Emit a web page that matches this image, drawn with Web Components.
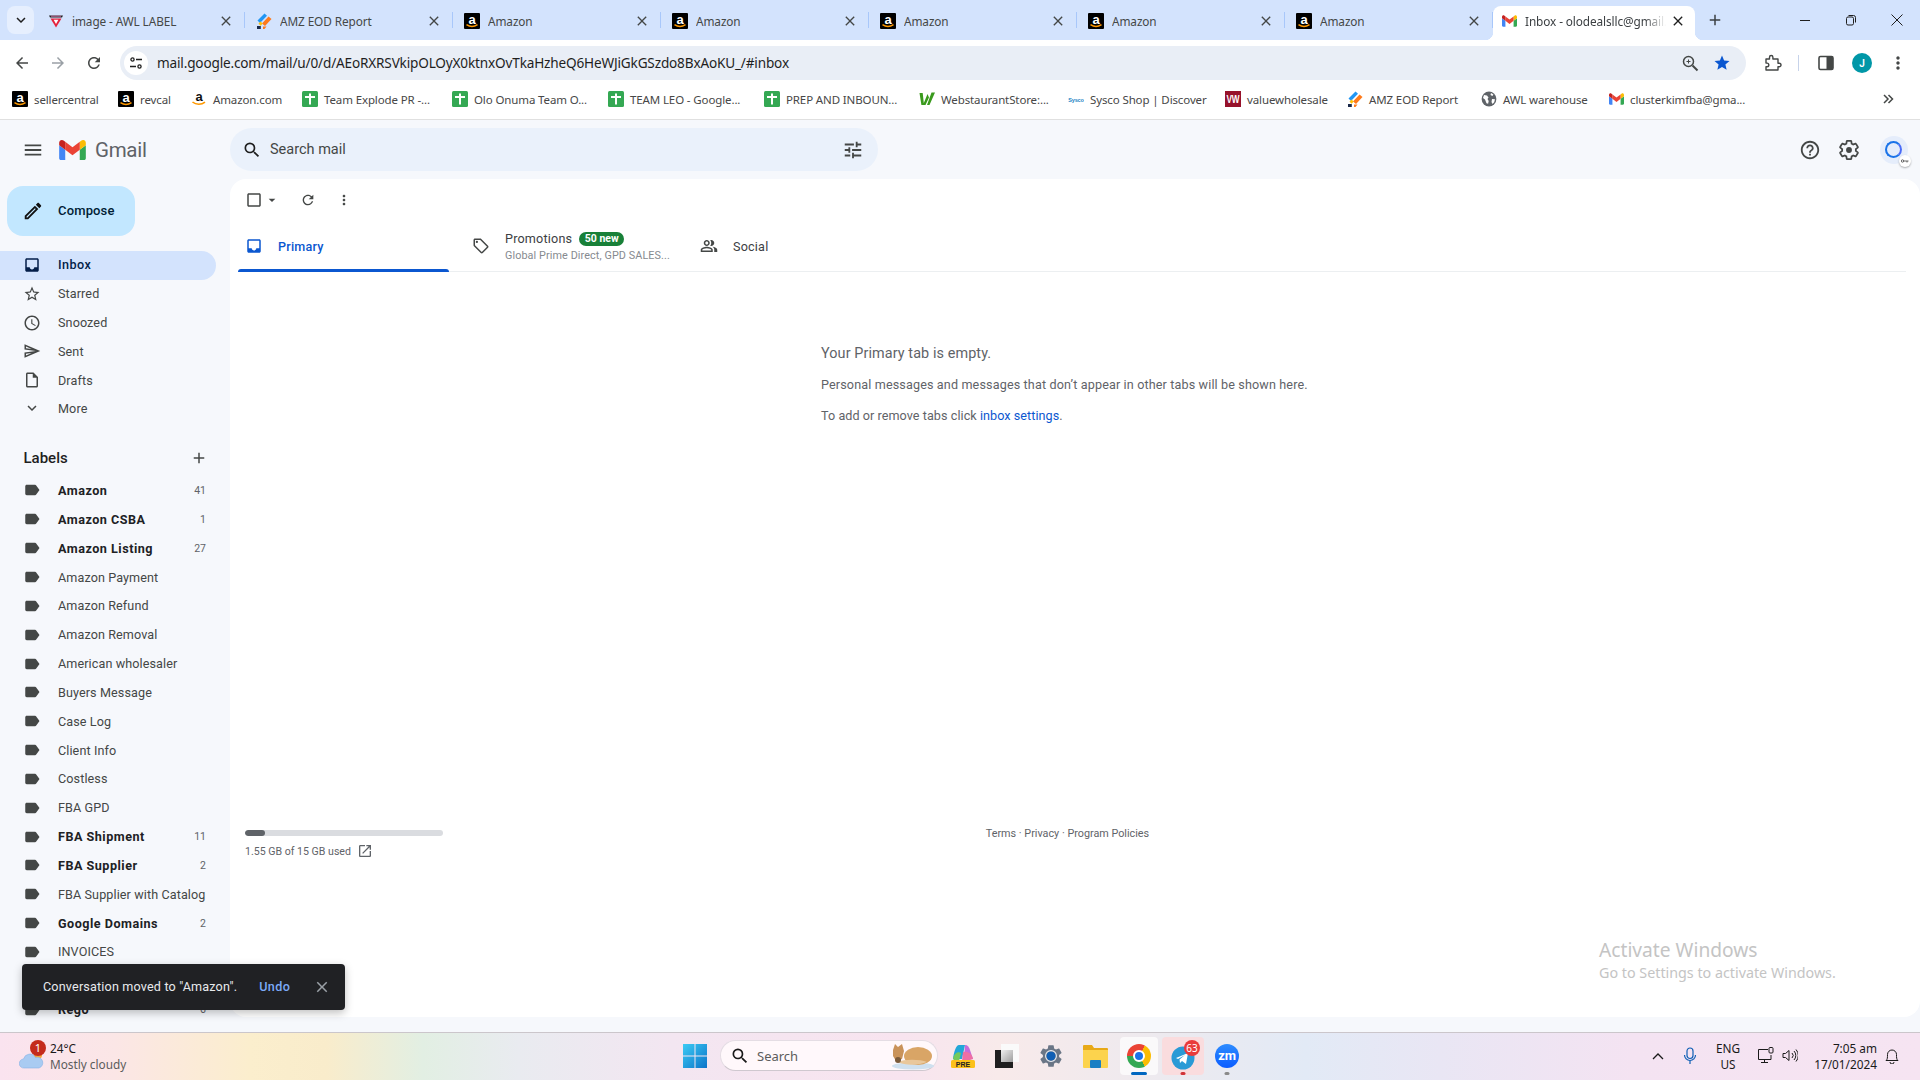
<!DOCTYPE html>
<html lang="en">
<head>
<meta charset="utf-8">
<title>Inbox</title>
<style>
  html, body { margin: 0; height: 100%; overflow: hidden; background: #f6f8fc; }
  body { display: flex; flex-direction: column; height: 1080px; font-family: Roboto, "Liberation Sans", sans-serif; }
  gmail-app { flex: 1; min-height: 0; }
</style>
</head>
<body>
  <tab-strip></tab-strip>
  <omni-bar></omni-bar>
  <bookmark-bar></bookmark-bar>
  <gmail-app></gmail-app>
  <win-taskbar></win-taskbar>

<script>
// material icon paths
const ICONS = {
  menu: 'M3 18h18v-2H3v2zm0-5h18v-2H3v2zm0-7v2h18V6H3z',
  search: 'M15.5 14h-.79l-.28-.27A6.471 6.471 0 0 0 16 9.5 6.5 6.5 0 1 0 9.5 16c1.61 0 3.09-.59 4.23-1.57l.27.28v.79l5 4.99L20.49 19l-4.99-5zm-6 0C7.01 14 5 11.99 5 9.5S7.01 5 9.5 5 14 7.01 14 9.5 11.99 14 9.5 14z',
  tune: 'M3 17v2h6v-2H3zM3 5v2h10V5H3zm10 16v-2h8v-2h-8v-2h-2v6h2zM7 9v2H3v2h4v2h2V9H7zm14 4v-2H11v2h10zm-6-4h2V7h4V5h-4V3h-2v6z',
  help: 'M11 18h2v-2h-2v2zm1-16C6.48 2 2 6.48 2 12s4.48 10 10 10 10-4.48 10-10S17.52 2 12 2zm0 18c-4.41 0-8-3.59-8-8s3.59-8 8-8 8 3.59 8 8-3.59 8-8 8zm0-14c-2.21 0-4 1.79-4 4h2c0-1.1.9-2 2-2s2 .9 2 2c0 2-3 1.75-3 5h2c0-2.25 3-2.5 3-5 0-2.21-1.79-4-4-4z',
  edit: 'M14.06 9.02l.92.92L5.92 19H5v-.92l9.06-9.06M17.66 3c-.25 0-.51.1-.7.29l-1.83 1.83 3.75 3.75 1.83-1.83c.39-.39.39-1.02 0-1.41l-2.34-2.34c-.2-.2-.45-.29-.71-.29zm-3.6 3.19L3 17.25V21h3.75L17.81 9.94l-3.75-3.75z',
  inbox: 'M19 3H5c-1.1 0-2 .9-2 2v14c0 1.1.9 2 2 2h14c1.1 0 2-.9 2-2V5c0-1.1-.9-2-2-2zm0 12h-4c0 1.66-1.35 3-3 3s-3-1.34-3-3H5V5h14v10z',
  star: 'M22 9.24l-7.19-.62L12 2 9.19 8.63 2 9.24l5.46 4.73L5.82 21 12 17.27 18.18 21l-1.63-7.03L22 9.24zM12 15.4l-3.76 2.27 1-4.28-3.32-2.88 4.38-.38L12 6.1l1.71 4.04 4.38.38-3.32 2.88 1 4.28L12 15.4z',
  clock: 'M11.99 2C6.47 2 2 6.48 2 12s4.47 10 9.99 10C17.52 22 22 17.52 22 12S17.52 2 11.99 2zM12 20c-4.42 0-8-3.58-8-8s3.58-8 8-8 8 3.58 8 8-3.58 8-8 8zm.5-13H11v6l5.25 3.15.75-1.23-4.5-2.67z',
  send: 'M4.01 6.03l7.51 3.22-7.52-1 .01-2.22m7.5 8.72L4 17.97v-2.22l7.51-1M2.01 3L2 10l15 2-15 2 .01 7L23 12 2.01 3z',
  draft: 'M14 2H6c-1.1 0-1.99.9-1.99 2L4 20c0 1.1.89 2 1.99 2H18c1.1 0 2-.9 2-2V8l-6-6zM6 20V4h7v5h5v11H6z',
  expand: 'M16.59 8.59L12 13.17 7.41 8.59 6 10l6 6 6-6z',
  label: 'M17.63 5.84C17.27 5.33 16.67 5 16 5L5 5.01C3.9 5.01 3 5.9 3 7v10c0 1.1.9 1.99 2 1.99L16 19c.67 0 1.27-.33 1.63-.84L22 12l-4.37-6.16z',
  add: 'M19 13h-6v6h-2v-6H5v-2h6V5h2v6h6v2z',
  refresh: 'M17.65 6.35C16.2 4.9 14.21 4 12 4c-4.42 0-7.99 3.58-7.99 8s3.57 8 7.99 8c3.73 0 6.84-2.55 7.73-6h-2.08c-.82 2.33-3.04 4-5.65 4-3.31 0-6-2.69-6-6s2.69-6 6-6c1.66 0 3.14.69 4.22 1.78L13 11h7V4l-2.35 2.35z',
  more: 'M12 8c1.1 0 2-.9 2-2s-.9-2-2-2-2 .9-2 2 .9 2 2 2zm0 2c-1.1 0-2 .9-2 2s.9 2 2 2 2-.9 2-2-.9-2-2-2zm0 6c-1.1 0-2 .9-2 2s.9 2 2 2 2-.9 2-2-.9-2-2-2z',
  checkbox: 'M19 5v14H5V5h14m0-2H5c-1.1 0-2 .9-2 2v14c0 1.1.9 2 2 2h14c1.1 0 2-.9 2-2V5c0-1.1-.9-2-2-2z',
  caret: 'M7 10l5 5 5-5z',
  tag: 'M21.41 11.58l-9-9C12.05 2.22 11.55 2 11 2H4c-1.1 0-2 .9-2 2v7c0 .55.22 1.05.59 1.42l9 9c.36.36.86.58 1.41.58s1.05-.22 1.41-.59l7-7c.37-.36.59-.86.59-1.41s-.23-1.06-.59-1.42zM13 20.01L4 11V4h7v-.01l9 9-7 7.02zM6.5 5A1.5 1.5 0 1 0 6.5 8 1.5 1.5 0 0 0 6.5 5z',
  people: 'M16.67 13.13C18.04 14.06 19 15.32 19 17v3h4v-3c0-2.18-3.57-3.47-6.33-3.87zM15 12c2.21 0 4-1.79 4-4s-1.79-4-4-4c-.47 0-.91.1-1.33.24C14.5 5.27 15 6.58 15 8s-.5 2.73-1.33 3.76c.42.14.86.24 1.33.24zM9 12c2.21 0 4-1.79 4-4s-1.79-4-4-4-4 1.79-4 4 1.79 4 4 4zm0-6c1.1 0 2 .9 2 2s-.9 2-2 2-2-.9-2-2 .9-2 2-2zM9 13c-2.67 0-8 1.34-8 4v3h16v-3c0-2.66-5.33-4-8-4zm6 5H3v-.99C3.2 16.29 6.3 15 9 15s5.8 1.29 6 2z',
  external: 'M19 19H5V5h7V3H5c-1.11 0-2 .9-2 2v14c0 1.1.89 2 2 2h14c1.1 0 2-.9 2-2v-7h-2v7zM14 3v2h3.59l-9.83 9.83 1.41 1.41L19 6.41V10h2V3h-7z',
  close: 'M19 6.41L17.59 5 12 10.59 6.41 5 5 6.41 10.59 12 5 17.59 6.41 19 12 13.41 17.59 19 19 17.59 13.41 12z',
  back: 'M20 11H7.83l5.59-5.59L12 4l-8 8 8 8 1.41-1.41L7.83 13H20v-2z',
  forward: 'M12 4l-1.41 1.41L16.17 11H4v2h12.17l-5.58 5.59L12 20l8-8z'
};

const GEAR = 'M19.43 12.98c.04-.32.07-.64.07-.98s-.03-.66-.07-.98l2.11-1.65c.19-.15.24-.42.12-.64l-2-3.46c-.12-.22-.39-.3-.61-.22l-2.49 1c-.52-.4-1.08-.73-1.69-.98l-.38-2.65C14.46 2.18 14.25 2 14 2h-4c-.25 0-.46.18-.49.42l-.38 2.65c-.61.25-1.17.59-1.69.98l-2.49-1c-.23-.09-.49 0-.61.22l-2 3.46c-.13.22-.07.49.12.64l2.11 1.65c-.04.32-.07.65-.07.98s.03.66.07.98l-2.11 1.65c-.19.15-.24.42-.12.64l2 3.46c.12.22.39.3.61.22l2.49-1c.52.4 1.08.73 1.69.98l.38 2.65c.03.24.24.42.49.42h4c.25 0 .46-.18.49-.42l.38-2.65c.61-.25 1.17-.59 1.69-.98l2.49 1c.23.09.49 0 .61-.22l2-3.46c.12-.22.07-.49-.12-.64l-2.11-1.65z';

const CHROME_FONT = '"Noto Sans", "Open Sans", "Liberation Sans", sans-serif';

const GMAIL_M = `<svg width="100%" height="100%" viewBox="52 42 88 66" xmlns="http://www.w3.org/2000/svg">
  <path fill="#4285f4" d="M58 108h14V74L52 59v43c0 3.32 2.69 6 6 6"/>
  <path fill="#34a853" d="M120 108h14c3.32 0 6-2.69 6-6V59l-20 15"/>
  <path fill="#fbbc04" d="M120 48v26l20-15v-8c0-7.42-8.47-11.65-14.4-7.2"/>
  <path fill="#ea4335" d="M72 74V48l24 18 24-18v26L96 92"/>
  <path fill="#c5221f" d="M52 51v8l20 15V48l-5.6-4.2c-5.94-4.45-14.4-.22-14.4 7.2"/>
</svg>`;

// small icon element, name comes from ICONS
class GIcon extends HTMLElement {
  connectedCallback() {
    const size = this.getAttribute('size') || 18;
    const color = this.getAttribute('color') || '#444746';
    this.attachShadow({ mode: 'open' }).innerHTML = `
      <style>:host { display: inline-flex; width: ${size}px; height: ${size}px; flex: none; } svg { display: block; }</style>
      <svg width="${size}" height="${size}" viewBox="0 0 24 24" fill="${color}"><path fill-rule="evenodd" d="${ICONS[this.getAttribute('name')]}"/></svg>`;
  }
}
customElements.define('g-icon', GIcon);

// favicons for tabs and bookmarks
class FavIcon extends HTMLElement {
  connectedCallback() {
    const kind = this.getAttribute('kind');
    const art = {
      amazon: `<svg viewBox="0 0 16 16" width="16" height="16"><rect width="16" height="16" rx="1" fill="#000"/><text x="8" y="10.5" text-anchor="middle" font-family="Liberation Sans" font-weight="700" font-size="13" fill="#fff">a</text><path d="M2.5 11.6c3.4 2.4 7.6 2.4 11 0" fill="none" stroke="#f90" stroke-width="1.4"/></svg>`,
      amazonwhite: `<svg viewBox="0 0 16 16" width="16" height="16"><text x="8" y="10" text-anchor="middle" font-family="Liberation Sans" font-weight="700" font-size="13" fill="#111">a</text><path d="M1.5 11c3.6 3 8.8 3 12.5.2" fill="none" stroke="#f90" stroke-width="1.6"/></svg>`,
      sheet: `<svg viewBox="0 0 16 16" width="16" height="16"><rect width="16" height="16" rx="1.5" fill="#34a853"/><path d="M3 5h4V2.500h2V5h4v2H9v6.500H7V7H3z" fill="#fff"/></svg>`,
      gmail: `<svg viewBox="52 42 88 66" width="15" height="12" style="margin:2px .5px"><path fill="#4285f4" d="M58 108h14V74L52 59v43c0 3.32 2.69 6 6 6"/><path fill="#34a853" d="M120 108h14c3.32 0 6-2.69 6-6V59l-20 15"/><path fill="#fbbc04" d="M120 48v26l20-15v-8c0-7.42-8.47-11.65-14.4-7.2"/><path fill="#ea4335" d="M72 74V48l24 18 24-18v26L96 92"/><path fill="#c5221f" d="M52 51v8l20 15V48l-5.6-4.2c-5.94-4.45-14.4-.22-14.4 7.2"/></svg>`,
      awl: `<svg viewBox="0 0 16 16" width="16" height="16"><path d="M1 2.500h14l-1 2H2z" fill="#222"/><path d="M2.500 5.500h11L8 14.500z" fill="#e5233d"/><path d="M5.600 6.800h4.800L8 11z" fill="#fff"/><path d="M3 3.200h10" stroke="#e879b8" stroke-width=".8"/></svg>`,
      report: `<svg viewBox="0 0 16 16" width="16" height="16"><path d="M1.500 7.500 8.500 .5l2.500 2.200-7 7.200z" fill="#2196f3"/><path d="M6 10.500 12.500 3.500 15.500 6l-6.500 7z" fill="#ff7a1a"/><path d="M4.500 8.500l2.200 2-2 2.200-2.200-2z" fill="#ffc107"/><path d="M1 13h3.800v3H1z" fill="#1b2a4a"/><path d="M7 13.500h3.500l-2 2.500H7z" fill="#ff7a1a"/></svg>`,
      webstaurant: `<svg viewBox="0 0 16 16" width="16" height="16"><path d="M.5 2h3.200l1.300 12H2.400zM4 14 8.500 3 10 6.500 6.500 14zM8 14 12.500 1.500H16L10.500 14z" fill="#3a9a1d"/></svg>`,
      sysco: `<svg viewBox="0 0 16 16" width="16" height="16"><text x="8" y="10.500" text-anchor="middle" font-family="Liberation Sans" font-size="5.500" font-weight="700" fill="#1a7fc4">Sysco</text></svg>`,
      vw: `<svg viewBox="0 0 16 16" width="16" height="16"><rect width="16" height="16" fill="#96122b"/><text x="8" y="12" text-anchor="middle" font-family="Liberation Sans" font-size="10" font-weight="700" fill="#fff" textLength="13" lengthAdjust="spacingAndGlyphs">VW</text></svg>`,
      globe: `<svg viewBox="0 0 16 16" width="16" height="16"><circle cx="8" cy="8" r="7.400" fill="#5f6368"/><path d="M3 4l3 .5 1.500 2-1 1.600 1.200 2-.6 2.600-1.600-.5L4 8.500 2 7zM10 2l2.400 1.500-1 1.500L9.500 4zM11 8l3 .2-.8 3L11.500 13l-1-2z" fill="#fff"/></svg>`
    }[kind];
    this.attachShadow({ mode: 'open' }).innerHTML = `
      <style>:host { display: inline-flex; width: 16px; height: 16px; flex: none; } svg { display: block; }</style>${art}`;
  }
}
customElements.define('fav-icon', FavIcon);

class ChromeTab extends HTMLElement {
  connectedCallback() {
    const active = this.hasAttribute('active');
    this.attachShadow({ mode: 'open' }).innerHTML = `
      <style>
        :host {
          display: flex; align-items: center; box-sizing: border-box; position: relative;
          width: ${active ? 202 : 208}px; height: 34px; padding: 0 ${active ? 9 : 11}px 4px ${active ? 8 : 11}px;
          font: 11.800px ${CHROME_FONT}; color: #444746; letter-spacing: -.1px;
          ${active ? 'background: #fff; border-radius: 8px 8px 0 0; color: #3c4043;' : ''}
        }
        :host(:not([active]))::after {
          content: ''; position: absolute; right: 0; top: 6px; width: 1px; height: 16px; background: #a8c7fa;
        }
        :host([active])::before, :host([active])::after {
          content: ''; position: absolute; bottom: 0; width: 8px; height: 8px;
        }
        :host([active])::before { left: -8px; background: radial-gradient(circle at 0 0, #d3e3fd 8px, #fff 8.5px); }
        :host([active])::after { right: -8px; background: radial-gradient(circle at 100% 0, #d3e3fd 8px, #fff 8.5px); }
        .title {
          flex: 1; min-width: 0; margin-left: 8px; white-space: nowrap; overflow: hidden;
          ${active ? '-webkit-mask-image: linear-gradient(90deg,#000 85%,transparent);' : ''}
        }
        g-icon { margin-left: 4px; }
      </style>
      <fav-icon kind="${this.getAttribute('kind')}"></fav-icon>
      <span class="title"><slot></slot></span>
      <g-icon name="close" size="16" color="${active ? '#1f1f1f' : '#444746'}"></g-icon>`;
  }
}
customElements.define('chrome-tab', ChromeTab);

class TabStrip extends HTMLElement {
  connectedCallback() {
    this.attachShadow({ mode: 'open' }).innerHTML = `
      <style>
        :host { display: flex; align-items: flex-end; height: 40px; background: #d3e3fd; box-sizing: border-box; padding-left: 7px; flex: none; }
        .chev { display: flex; align-items: center; justify-content: center; width: 27px; height: 28px; margin: 0 3px 6px 0; background: #e6effe; border-radius: 8px; }
        .plus { display: flex; align-items: center; justify-content: center; width: 28px; height: 28px; margin: 0 0 6px 6px; }
        .win { margin-left: auto; display: flex; height: 40px; }
        .win span { width: 46px; display: flex; align-items: center; justify-content: center; }
      </style>
      <div class="chev"><g-icon name="expand" size="18" color="#1f1f1f"></g-icon></div>
      <chrome-tab kind="awl">image - AWL LABEL</chrome-tab>
      <chrome-tab kind="report">AMZ EOD Report</chrome-tab>
      <chrome-tab kind="amazon">Amazon</chrome-tab>
      <chrome-tab kind="amazon">Amazon</chrome-tab>
      <chrome-tab kind="amazon">Amazon</chrome-tab>
      <chrome-tab kind="amazon">Amazon</chrome-tab>
      <chrome-tab kind="amazon">Amazon</chrome-tab>
      <chrome-tab kind="gmail" active>Inbox - olodealsllc@gmail.com</chrome-tab>
      <div class="plus"><g-icon name="add" size="18" color="#3c4043"></g-icon></div>
      <div class="win">
        <span><svg width="12" height="12" viewBox="0 0 12 12"><path d="M1 6.500h10" stroke="#1f1f1f" stroke-width="1"/></svg></span>
        <span><svg width="12" height="12" viewBox="0 0 12 12" fill="none" stroke="#1f1f1f"><rect x="1.500" y="3" width="7" height="8" rx="1.500"/><path d="M3.500 1.500h5a2 2 0 0 1 2 2v5"/></svg></span>
        <span><svg width="14" height="14" viewBox="0 0 14 14"><path d="M1.500 1.500l11 11m0-11l-11 11" stroke="#1f1f1f" stroke-width="1"/></svg></span>
      </div>`;
  }
}
customElements.define('tab-strip', TabStrip);

class OmniBar extends HTMLElement {
  connectedCallback() {
    this.attachShadow({ mode: 'open' }).innerHTML = `
      <style>
        :host { display: flex; align-items: center; height: 46px; background: #fff; padding-left: 4px; box-sizing: border-box; flex: none; }
        .nav { width: 36px; display: flex; justify-content: center; }
        .box {
          width: 1626px; height: 34px; margin-left: 8px; background: #e9eef6; border-radius: 17px;
          display: flex; align-items: center; box-sizing: border-box; padding-left: 4px;
          font: 13.600px ${CHROME_FONT}; color: #1f1f1f;
        }
        .chip { width: 24px; height: 24px; background: #fff; border-radius: 50%; display: flex; align-items: center; justify-content: center; flex: none; }
        .url { margin-left: 9px; letter-spacing: -.17px; line-height: 20px; }
        .end { margin-left: auto; display: flex; align-items: center; gap: 14px; padding-right: 15px; }
        .tools { flex: 1; display: flex; align-items: center; position: relative; }
        .sep { width: 1px; height: 16px; background: #c7d3ea; }
        .avatar { width: 20px; height: 20px; border-radius: 50%; background: #0097a7; color: #fff; font: 600 10px Roboto, sans-serif; display: flex; align-items: center; justify-content: center; }
      </style>
      <div class="nav"><g-icon name="back" size="18" color="#444746"></g-icon></div>
      <div class="nav"><g-icon name="forward" size="18" color="#9aa0a6"></g-icon></div>
      <div class="nav"><g-icon name="refresh" size="18" color="#444746"></g-icon></div>
      <div class="box">
        <div class="chip">
          <svg width="14" height="14" viewBox="0 0 14 14" fill="none" stroke="#1f1f1f" stroke-width="1.300"><circle cx="3.500" cy="3.500" r="1.600"/><path d="M7 3.500h6M1 10.500h6"/><circle cx="10.500" cy="10.500" r="1.600"/></svg>
        </div>
        <span class="url">mail.google.com/mail/u/0/d/AEoRXRSVkipOLOyX0ktnxOvTkaHzheQ6HeWJiGkGSzdo8BxAoKU_/#inbox</span>
        <div class="end">
          <svg width="18" height="18" viewBox="0 0 18 18" fill="none" stroke="#444746"><circle cx="7.500" cy="7.500" r="5" stroke-width="1.500"/><path d="M11.500 11.500l5 5" stroke-width="2"/><path d="M5.500 7.500h4M7.500 5.500v4" stroke-width="1"/></svg>
          <svg width="18" height="18" viewBox="0 0 24 24" fill="#0b57d0"><path d="M12 17.270 18.180 21l-1.640-7.030L22 9.240l-7.190-.61L12 2 9.190 8.630 2 9.240l5.460 4.730L5.820 21z"/></svg>
        </div>
      </div>
      <div class="tools">
        <svg style="margin-left:18px" width="18" height="18" viewBox="0 0 18 18" fill="none" stroke="#444746" stroke-width="1.400"><path d="M2 5h3.500V3.200a1.700 1.700 0 0 1 3.400 0V5H14v4.200h1.200a1.800 1.800 0 0 1 0 3.600H14V16H2v-3.300h1a1.800 1.800 0 0 0 0-3.600H2z" stroke-linejoin="round"/></svg>
        <div class="sep" style="margin-left:16px"></div>
        <svg style="margin-left:19px" width="16" height="16" viewBox="0 0 16 16"><rect x="1" y="1.500" width="14" height="13" rx="1.500" fill="none" stroke="#444746" stroke-width="1.600"/><rect x="8.500" y="1.500" width="6.500" height="13" fill="#444746"/></svg>
        <div class="avatar" style="margin-left:18px">J</div>
        <g-icon style="margin-left:16px" name="more" size="20" color="#444746"></g-icon>
      </div>`;
  }
}
customElements.define('omni-bar', OmniBar);

class BookMark extends HTMLElement {
  connectedCallback() {
    this.attachShadow({ mode: 'open' }).innerHTML = `
      <style>
        :host { display: flex; align-items: center; gap: 6px; width: ${this.getAttribute('w')}px; flex: none; font: 11.500px ${CHROME_FONT}; color: #474747; letter-spacing: -.12px; white-space: nowrap; }
      </style>
      <fav-icon kind="${this.getAttribute('kind')}"></fav-icon><slot></slot>`;
  }
}
customElements.define('book-mark', BookMark);

class BookmarkBar extends HTMLElement {
  connectedCallback() {
    this.attachShadow({ mode: 'open' }).innerHTML = `
      <style>
        :host { display: flex; align-items: center; height: 34px; background: #fff; padding: 0 0 7px 12px; box-sizing: border-box; flex: none; border-bottom: 1px solid #e0e0e0; }
        .more { margin-left: auto; margin-right: 26px; }
      </style>
      <book-mark w="106" kind="amazon">sellercentral</book-mark>
      <book-mark w="73" kind="amazon">revcal</book-mark>
      <book-mark w="111" kind="amazonwhite">Amazon.com</book-mark>
      <book-mark w="150" kind="sheet">Team Explode PR -...</book-mark>
      <book-mark w="156" kind="sheet">Olo Onuma Team O...</book-mark>
      <book-mark w="156" kind="sheet">TEAM LEO - Google...</book-mark>
      <book-mark w="155" kind="sheet">PREP AND INBOUN...</book-mark>
      <book-mark w="149" kind="webstaurant">WebstaurantStore:...</book-mark>
      <book-mark w="157" kind="sysco">Sysco Shop | Discover</book-mark>
      <book-mark w="122" kind="vw">valuewholesale</book-mark>
      <book-mark w="134" kind="report">AMZ EOD Report</book-mark>
      <book-mark w="127" kind="globe">AWL warehouse</book-mark>
      <book-mark w="136" kind="gmail">clusterkimfba@gma...</book-mark>
      <svg class="more" width="12" height="12" viewBox="0 0 12 12" fill="none" stroke="#444746" stroke-width="1.500"><path d="M2 2l4 4-4 4M6.500 2l4 4-4 4"/></svg>`;
  }
}
customElements.define('bookmark-bar', BookmarkBar);

class NavRow extends HTMLElement {
  connectedCallback() {
    const icon = this.getAttribute('icon') || 'label';
    const active = this.hasAttribute('active');
    const color = active ? '#041e49' : '#444746';
    const count = this.getAttribute('count');
    this.attachShadow({ mode: 'open' }).innerHTML = `
      <style>
        :host {
          display: flex; align-items: center; box-sizing: border-box; height: 28.850px; width: 216px;
          padding: 0 10px 1px 23px; border-radius: 0 15px 15px 0; flex: none;
          font: 400 12.600px Roboto, sans-serif; letter-spacing: .1px; color: #444746;
        }
        :host([active]) { background: #d3e3fd; font-weight: 500; color: #041e49; letter-spacing: .45px; }
        :host([strong]) { font-weight: 700; color: #202124; letter-spacing: .5px; }
        .text { margin-left: 17px; flex: 1; white-space: nowrap; }
        .count { font-size: 10.500px; font-weight: 400; color: #5f6368; letter-spacing: 0; }
      </style>
      <g-icon name="${icon}" size="18" color="${color}"></g-icon>
      <span class="text"><slot></slot></span>
      ${count ? `<span class="count">${count}</span>` : ''}`;
  }
}
customElements.define('nav-row', NavRow);

class GmailSidebar extends HTMLElement {
  connectedCallback() {
    this.attachShadow({ mode: 'open' }).innerHTML = `
      <style>
        :host { display: flex; flex-direction: column; overflow: hidden; height: 853px; }
        .compose {
          width: 128px; height: 50px; margin: 7px 0 15px 7px; background: #c2e7ff; border-radius: 16px; flex: none;
          display: flex; align-items: center; box-sizing: border-box; padding: 0 0 1px 15px; gap: 14px;
          font: 500 13px Roboto, sans-serif; color: #001d35; letter-spacing: .15px;
        }
        .labels {
          display: flex; align-items: center; justify-content: space-between; height: 29px; flex: none;
          margin: 20px 0 3.500px; padding: 0 8px 1px 23.500px; width: 216px; box-sizing: border-box;
          font: 500 15px Roboto, sans-serif; color: #1f1f1f;
        }
      </style>
      <div class="compose"><g-icon name="edit" size="22" color="#111"></g-icon>Compose</div>
      <nav-row icon="inbox" active>Inbox</nav-row>
      <nav-row icon="star">Starred</nav-row>
      <nav-row icon="clock">Snoozed</nav-row>
      <nav-row icon="send">Sent</nav-row>
      <nav-row icon="draft">Drafts</nav-row>
      <nav-row icon="expand" style="padding-bottom:3px">More</nav-row>
      <div class="labels">Labels<g-icon name="add" size="18" color="#444746"></g-icon></div>
      <nav-row strong count="41">Amazon</nav-row>
      <nav-row strong count="1">Amazon CSBA</nav-row>
      <nav-row strong count="27">Amazon Listing</nav-row>
      <nav-row>Amazon Payment</nav-row>
      <nav-row>Amazon Refund</nav-row>
      <nav-row>Amazon Removal</nav-row>
      <nav-row>American wholesaler</nav-row>
      <nav-row>Buyers Message</nav-row>
      <nav-row>Case Log</nav-row>
      <nav-row>Client Info</nav-row>
      <nav-row>Costless</nav-row>
      <nav-row>FBA GPD</nav-row>
      <nav-row strong count="11">FBA Shipment</nav-row>
      <nav-row strong count="2">FBA Supplier</nav-row>
      <nav-row>FBA Supplier with Catalog</nav-row>
      <nav-row strong count="2">Google Domains</nav-row>
      <nav-row>INVOICES</nav-row>
      <nav-row></nav-row>
      <nav-row strong count="6">Rego</nav-row>`;
  }
}
customElements.define('gmail-sidebar', GmailSidebar);

class GmailHeader extends HTMLElement {
  connectedCallback() {
    this.attachShadow({ mode: 'open' }).innerHTML = `
      <style>
        :host { display: flex; align-items: center; height: 59px; box-sizing: border-box; grid-column: 1 / 3; }
        .brand { width: 230px; display: flex; align-items: center; flex: none; padding-left: 22px; box-sizing: border-box; }
        .logo { width: 27px; height: 20px; margin-left: 15px; }
        .word { margin-left: 9px; font: 400 20.500px Roboto, sans-serif; color: #5f6368; letter-spacing: -.3px; }
        .search {
          width: 648px; height: 43px; border-radius: 22px; background: #eaf1fb; display: flex; align-items: center;
          box-sizing: border-box; padding: 0 14px 0 12px; font: 400 14.500px Roboto, sans-serif; color: #444746;
        }
        .search span { margin-left: 8px; flex: 1; }
        .right { margin-left: auto; display: flex; align-items: center; padding-right: 12px; }
        .avatar { position: relative; width: 28px; height: 28px; border-radius: 50%; background: #e5edfb; margin-left: 20px; display: flex; align-items: center; justify-content: center; }
        .ring { width: 13px; height: 13px; border-radius: 50%; border: 2px solid #1a73e8; border-right-color: #4a6cf7; margin-left: -2px; }
        .key { position: absolute; right: -3px; bottom: -3px; width: 12px; height: 12px; border-radius: 50%; background: #fff; box-shadow: 0 1px 2px rgba(0,0,0,.3); display: flex; align-items: center; justify-content: center; }
      </style>
      <div class="brand">
        <g-icon name="menu" size="22" color="#444746"></g-icon>
        <div class="logo">${GMAIL_M}</div>
        <div class="word">Gmail</div>
      </div>
      <div class="search">
        <g-icon name="search" size="20" color="#1f1f1f"></g-icon>
        <span>Search mail</span>
        <g-icon name="tune" size="22" color="#444746"></g-icon>
      </div>
      <div class="right">
        <g-icon name="help" size="22" color="#444746"></g-icon>
        <svg style="margin-left:17px" width="22" height="22" viewBox="0 0 24 24"><path d="${GEAR}" fill="none" stroke="#444746" stroke-width="1.900"/><circle cx="12" cy="12" r="3.200" fill="#444746"/></svg>
        <div class="avatar"><div class="ring"></div>
          <div class="key"><svg width="8" height="4" viewBox="0 0 8 4" fill="none" stroke="#444" stroke-width=".8"><circle cx="1.500" cy="2" r="1.200"/><path d="M2.700 2H7.500M6 2v1.500"/></svg></div>
        </div>
      </div>`;
  }
}
customElements.define('gmail-header', GmailHeader);

class InboxTab extends HTMLElement {
  connectedCallback() {
    this.attachShadow({ mode: 'open' }).innerHTML = `
      <style>
        :host { display: flex; align-items: center; box-sizing: border-box; height: 50px; padding-bottom: 2px; position: relative; flex: none; font: 500 12.600px Roboto, sans-serif; color: #444746; letter-spacing: .2px; }
        :host([active]) { color: #0b57d0; }
        :host([active])::after { content: ''; position: absolute; left: 0; right: 0; bottom: 0; height: 3px; background: #0b57d0; border-radius: 3px 3px 0 0; }
        .t { margin-left: 15px; }
        .sub { display: block; font: 400 10.800px Roboto, sans-serif; color: #868a8f; margin-top: 3px; letter-spacing: .1px; }
        .badge { display: inline-block; background: #188038; color: #fff; border-radius: 7px; font: 700 10.500px/14px Roboto, sans-serif; padding: 0 5.500px; margin-left: 7px; vertical-align: 1px; letter-spacing: 0; }
      </style>
      <g-icon name="${this.getAttribute('icon')}" size="18" color="${this.hasAttribute('active') ? '#0b57d0' : '#444746'}"></g-icon>
      <div class="t"><slot></slot>${this.hasAttribute('badge') ? `<span class="badge">${this.getAttribute('badge')}</span>` : ''}${this.hasAttribute('sub') ? `<span class="sub">${this.getAttribute('sub')}</span>` : ''}</div>`;
  }
}
customElements.define('inbox-tab', InboxTab);

class InboxPanel extends HTMLElement {
  connectedCallback() {
    this.attachShadow({ mode: 'open' }).innerHTML = `
      <style>
        :host { display: flex; flex-direction: column; background: #fff; border-radius: 16px; margin-bottom: 15px; height: 838px; font-family: Roboto, sans-serif; }
        .tools { display: flex; align-items: center; height: 43px; padding-bottom: 2px; box-sizing: border-box; flex: none; padding-left: 15px; }
        .tabs { display: flex; height: 50px; flex: none; margin: 0 14px 0 8px; position: relative; border-bottom: 1px solid #eceff1; box-sizing: border-box; }
        .tabs inbox-tab { margin-bottom: -1px; }
        .msg { padding: 65.500px 0 0 591px; font-size: 12.600px; line-height: 31px; color: #5f6368; letter-spacing: .135px; }
        .msg h2 { margin: 0; font: 400 14.400px/31px Roboto, sans-serif; color: #5f6368; letter-spacing: .1px; }
        .msg a { color: #0b57d0; text-decoration: none; }
        .msg .to { letter-spacing: .06px; }
        .foot { margin-top: auto; padding: 0 30px 158px 15px; display: grid; grid-template-columns: 1fr auto 1fr; font-size: 10.800px; color: #5f6368; }
        .bar { width: 198px; height: 6px; border-radius: 3px; background: #dadce0; overflow: hidden; margin-top: 0; }
        .bar i { display: block; width: 20px; height: 6px; background: #5f6368; border-radius: 3px; }
        .used { display: flex; align-items: center; margin-top: 7px; height: 16px; gap: 6px; font-size: 10.600px; }
        .terms { margin-top: -3px; }
      </style>
      <div class="tools">
        <g-icon name="checkbox" size="18" color="#444746"></g-icon>
        <g-icon name="caret" size="16" color="#444746" style="margin-left:1px"></g-icon>
        <g-icon name="refresh" size="16" color="#444746" style="margin-left:20px"></g-icon>
        <g-icon name="more" size="16" color="#444746" style="margin-left:20px"></g-icon>
      </div>
      <div class="tabs">
        <inbox-tab active icon="inbox" style="width:211px;padding-left:7px">Primary</inbox-tab>
        <inbox-tab icon="tag" badge="50 new" sub="Global Prime Direct, GPD SALES..." style="width:238px;padding-left:23px;font-weight:400;color:#3c4043">Promotions</inbox-tab>
        <inbox-tab icon="people" style="padding-left:13px;font-weight:400;color:#3c4043">Social</inbox-tab>
      </div>
      <div class="msg">
        <h2>Your Primary tab is empty.</h2>
        <div>Personal messages and messages that don’t appear in other tabs will be shown here.</div>
        <div class="to">To add or remove tabs click <a>inbox settings</a>.</div>
      </div>
      <div class="foot">
        <div>
          <div class="bar"><i></i></div>
          <div class="used">1.55 GB of 15 GB used <g-icon name="external" size="16" color="#5f6368"></g-icon></div>
        </div>
        <div class="terms">Terms · Privacy · Program Policies</div>
        <div></div>
      </div>`;
  }
}
customElements.define('inbox-panel', InboxPanel);

class SnackBar extends HTMLElement {
  connectedCallback() {
    this.attachShadow({ mode: 'open' }).innerHTML = `
      <style>
        :host {
          position: absolute; left: 22px; top: 844px; width: 323px; height: 46px; box-sizing: border-box;
          display: flex; align-items: center; padding: 0 14px 1px 21px; background: #202124; border-radius: 4px;
          box-shadow: 0 3px 8px rgba(0,0,0,.25); font: 400 12.600px Roboto, sans-serif; color: #e8eaed; letter-spacing: .17px;
        }
        .undo { margin-left: 22px; color: #7baaf7; font-weight: 500; letter-spacing: .4px; }
        g-icon { margin-left: auto; }
      </style>
      <span>Conversation moved to "Amazon".</span>
      <span class="undo">Undo</span>
      <g-icon name="close" size="18" color="#9aa0a6"></g-icon>`;
  }
}
customElements.define('snack-bar', SnackBar);

class ActivateNote extends HTMLElement {
  connectedCallback() {
    this.attachShadow({ mode: 'open' }).innerHTML = `
      <style>
        :host { position: absolute; left: 1599px; top: 817px; font-family: ${CHROME_FONT}; color: #c4c4c4; white-space: nowrap; }
        .a { font-size: 19.200px; line-height: 26px; }
        .b { font-size: 14.300px; line-height: 20px; }
      </style>
      <div class="a">Activate Windows</div>
      <div class="b">Go to Settings to activate Windows.</div>`;
  }
}
customElements.define('activate-note', ActivateNote);

class GmailApp extends HTMLElement {
  connectedCallback() {
    this.attachShadow({ mode: 'open' }).innerHTML = `
      <style>
        :host { display: grid; grid-template-columns: 230px 1fr; grid-template-rows: 59px 1fr; background: #f6f8fc; position: relative; overflow: hidden; }
      </style>
      <gmail-header></gmail-header>
      <gmail-sidebar></gmail-sidebar>
      <inbox-panel></inbox-panel>
      <snack-bar></snack-bar>
      <activate-note></activate-note>`;
  }
}
customElements.define('gmail-app', GmailApp);

class WinTaskbar extends HTMLElement {
  connectedCallback() {
    this.attachShadow({ mode: 'open' }).innerHTML = `
      <style>
        :host {
          display: flex; align-items: center; height: 48px; box-sizing: border-box; flex: none; border-top: 1px solid #cbc6cb; padding-bottom: 2px;
          background: linear-gradient(90deg,#fae3ef 0%,#fbe6e6 6%,#fbeecd 13%,#f9eccb 17%,#e2efe3 22%,#e9ebf0 27%,#f3e6f1 35%,#f8e4ef 47%,#f8eaea 52%,#ebeaf0 62%,#e2eaf6 68%,#e9e6f4 75%,#f4e3f2 85%,#f6e4f2 100%);
          font: 11.800px ${CHROME_FONT}; color: #1a1a1a;
        }
        .weather { width: 660px; box-sizing: border-box; padding-left: 19px; display: flex; align-items: center; flex: none; }
        .cloud { position: relative; width: 25px; height: 30px; }
        .cloud b { position: absolute; left: 11px; top: -1px; width: 16px; height: 16px; border-radius: 50%; background: #c42b1c; color: #fff; font: 400 11px/16px ${CHROME_FONT}; text-align: center; }
        .wtext { margin-left: 6px; line-height: 16px; }
        .wtext div + div { color: #5c5c5c; }
        .start { width: 60px; display: flex; justify-content: center; padding-left: 9px; box-sizing: border-box; flex: none; }
        .find { width: 218px; height: 31px; box-sizing: border-box; border-radius: 16px; background: #fff8fb; border: 1px solid #e4dde4; border-bottom-color: #cfc8cf; display: flex; align-items: center; padding-left: 9px; color: #5c5c5c; font-size: 13px; position: relative; flex: none; }
        .find span { margin-left: 7px; }
        .find svg.fox { position: absolute; right: 2px; top: 0; }
        .apps { display: flex; margin-left: 3px; }
        .app { width: 44px; height: 46px; display: flex; align-items: center; justify-content: center; position: relative; flex: none; }
        .app.on::before { content: ''; position: absolute; left: 3px; right: 3px; top: 4px; bottom: 4px; background: rgba(255,255,255,.7); border-radius: 4px; }
        .app.hot::before { content: ''; position: absolute; left: 1px; right: 1px; top: 4px; bottom: 4px; background: #fadcde; border-radius: 4px; }
        .app > * { position: relative; }
        .dot { position: absolute; bottom: 4px; left: 50%; height: 3px; border-radius: 2px; transform: translateX(-50%); width: 5px; background: #8a8a8a; }
        .dot.blue { width: 16px; background: #0067c0; }
        .dot.red { background: #d13438; }
        .chrome { width: 24px; height: 24px; border-radius: 50%; background: conic-gradient(from 30deg, #fbbc04 0 120deg, #34a853 120deg 240deg, #ea4335 240deg 360deg); display: flex; align-items: center; justify-content: center; }
        .chrome i { width: 8px; height: 8px; border-radius: 50%; background: #1a73e8; border: 2.500px solid #fff; }
        .count { position: absolute !important; top: 7px; right: 5px; min-width: 16px; height: 16px; border-radius: 8px; background: #e93b3b; color: #fff; font: 10px/16px ${CHROME_FONT}; text-align: center; }
        .zm { width: 24px; height: 24px; border-radius: 50%; background: linear-gradient(#2d8cff,#0b5cff); color: #fff; font: 700 13px/23px Roboto, sans-serif; text-align: center; letter-spacing: -.3px; }
        .tray { margin-left: auto; display: flex; align-items: center; padding-right: 13px; height: 100%; }
        .tray > div { display: flex; align-items: center; justify-content: center; flex: none; }
        .lang { flex-direction: column; line-height: 16px; width: 40px; text-align: center; margin-top: 1px; }
        .clock { width: 79px; flex-direction: column; align-items: flex-end !important; line-height: 16px; margin-top: 1px; }
      </style>
      <div class="weather">
        <div class="cloud">
          <svg width="25" height="30" viewBox="0 0 25 30"><circle cx="19" cy="14" r="4" fill="#f5a73b"/><path d="M5 27a4.500 4.500 0 0 1-.5-9 6.500 6.500 0 0 1 12-1.500 5 5 0 0 1 3.500 10.500z" fill="#a9cbf2" stroke="#86b1e6" stroke-width=".6"/></svg>
          <b>1</b>
        </div>
        <div class="wtext"><div>24°C</div><div>Mostly cloudy</div></div>
      </div>
      <div class="start">
        <svg width="24" height="24" viewBox="0 0 24 24"><defs><linearGradient id="w" x1="0" y1="0" x2="1" y2="1"><stop offset="0" stop-color="#3ccbf4"/><stop offset="1" stop-color="#0c74c9"/></linearGradient></defs><path d="M0 0h11.500v11.500H0zM12.500 0H24v11.500H12.500zM0 12.500h11.500V24H0zM12.500 12.500H24V24H12.500z" fill="url(#w)"/></svg>
      </div>
      <div class="find">
        <g-icon name="search" size="20" color="#1a1a1a"></g-icon><span>Search</span>
        <svg class="fox" width="46" height="29" viewBox="0 0 46 29"><ellipse cx="24" cy="25" rx="21" ry="3.500" fill="#cfe0ef"/><ellipse cx="29" cy="15" rx="14" ry="9" fill="#d9a566"/><path d="M4 9l2-6 3 3 4-3 2 7-2 8-6 2-3-5z" fill="#c9935a"/><path d="M9 21c6-3 22-3 29 0-7 3-22 4-29 0z" fill="#e9c79b"/><circle cx="9" cy="19" r="3" fill="#7a5a3a"/></svg>
      </div>
      <div class="apps">
        <div class="app">
          <svg width="24" height="24" viewBox="0 0 24 24"><path d="M8 1h6l-3 14H2c.5-6 3-14 6-14z" fill="#22a7d8"/><path d="M14 1c3 0 4 2 5 5l3 9h-9z" fill="#c56bdc"/><path d="M2 15c1-6 5-8 8-6l-2 8H4z" fill="#74c95b"/><path d="M12 8c4-1 9 1 10 7l-6 2h-5z" fill="#ee6fa4"/><rect y="16" width="24" height="8" rx="1.500" fill="#fcc01a"/><text x="12" y="22.500" text-anchor="middle" font-family="Liberation Sans" font-weight="700" font-size="7" fill="#222">PRE</text></svg>
        </div>
        <div class="app">
          <svg width="24" height="24" viewBox="0 0 24 24"><defs><linearGradient id="t" x1="0" y1="0" x2="1" y2="1"><stop offset="0" stop-color="#f0f0f0"/><stop offset="1" stop-color="#9c9c9c"/></linearGradient></defs><rect x="6" y="0" width="18" height="18" fill="#fafafa"/><rect x="0" y="6" width="18" height="18" fill="#1f1f1f"/><rect x="6" y="6" width="12" height="12" fill="url(#t)"/></svg>
        </div>
        <div class="app">
          <svg width="26" height="26" viewBox="0 0 24 24"><path fill="#6a7686" d="${GEAR}"/><circle cx="12" cy="12" r="4.200" fill="#0f5fb5"/><circle cx="12" cy="12" r="5" fill="none" stroke="#e9eef4"/></svg>
        </div>
        <div class="app">
          <svg width="25" height="24" viewBox="0 0 25 24"><path d="M0 2a1 1 0 0 1 1-1h8l2 3h13a1 1 0 0 1 1 1v4H0z" fill="#e8a917"/><path d="M0 6h25v17a1 1 0 0 1-1 1H1a1 1 0 0 1-1-1z" fill="#fcd34d"/><rect x="7" y="16" width="11" height="8" rx="1" fill="#1a7fc4"/></svg>
        </div>
        <div class="app on"><div class="chrome"><i></i></div><span class="dot blue"></span></div>
        <div class="app hot">
          <svg width="24" height="24" viewBox="0 0 24 24" style="margin-top:4px"><circle cx="12" cy="12" r="11.500" fill="#2a9ad6"/><path d="M5 12l12-5-2 11-4-3-2 2-.5-3.500 5.500-4.500-7 4z" fill="#fff"/></svg>
          <span class="count">63</span><span class="dot red"></span>
        </div>
        <div class="app"><div class="zm">zm</div><span class="dot"></span></div>
      </div>
      <div class="tray">
        <div style="width:28px"><svg width="12" height="8" viewBox="0 0 12 8" fill="none" stroke="#1a1a1a" stroke-width="1.300"><path d="M1 7l5-5 5 5"/></svg></div>
        <div style="width:36px"><svg width="14" height="18" viewBox="0 0 14 18" fill="none" stroke="#0f5fb5" stroke-width="1.200"><rect x="4" y="1" width="6" height="10.500" rx="3"/><path d="M1.500 8a5.500 5.500 0 0 0 11 0M7 13.500V17"/></svg></div>
        <div class="lang"><span>ENG</span><span>US</span></div>
        <div style="width:34px"><svg width="17" height="17" viewBox="0 0 17 17" fill="none" stroke="#1a1a1a"><path d="M11 2.500H1.500v10H14V8M4 15.500h7M7.500 12.500v3"/><rect x="12" y=".5" width="4" height="5.500" rx="1"/></svg></div>
        <div style="width:16px"><svg width="16" height="15" viewBox="0 0 16 15" fill="none" stroke="#1a1a1a"><path d="M1 5.500v4h2.500L7 12.500v-10L3.500 5.500zM10 5a3.500 3.500 0 0 1 0 5M12 3a6.500 6.500 0 0 1 0 9M14 1.500a9 9 0 0 1 0 12"/></svg></div>
        <div class="clock"><span>7:05 am</span><span>17/01/2024</span></div>
        <div style="width:30px"><svg width="14" height="16" viewBox="0 0 14 16" fill="none" stroke="#1a1a1a"><path d="M1 12.500c1.500-1 1.500-3 1.500-6a4.500 4.500 0 0 1 9 0c0 3 0 5 1.500 6zM5 14a2 2 0 0 0 4 0"/></svg></div>
      </div>`;
  }
}
customElements.define('win-taskbar', WinTaskbar);
</script>
</body>
</html>
